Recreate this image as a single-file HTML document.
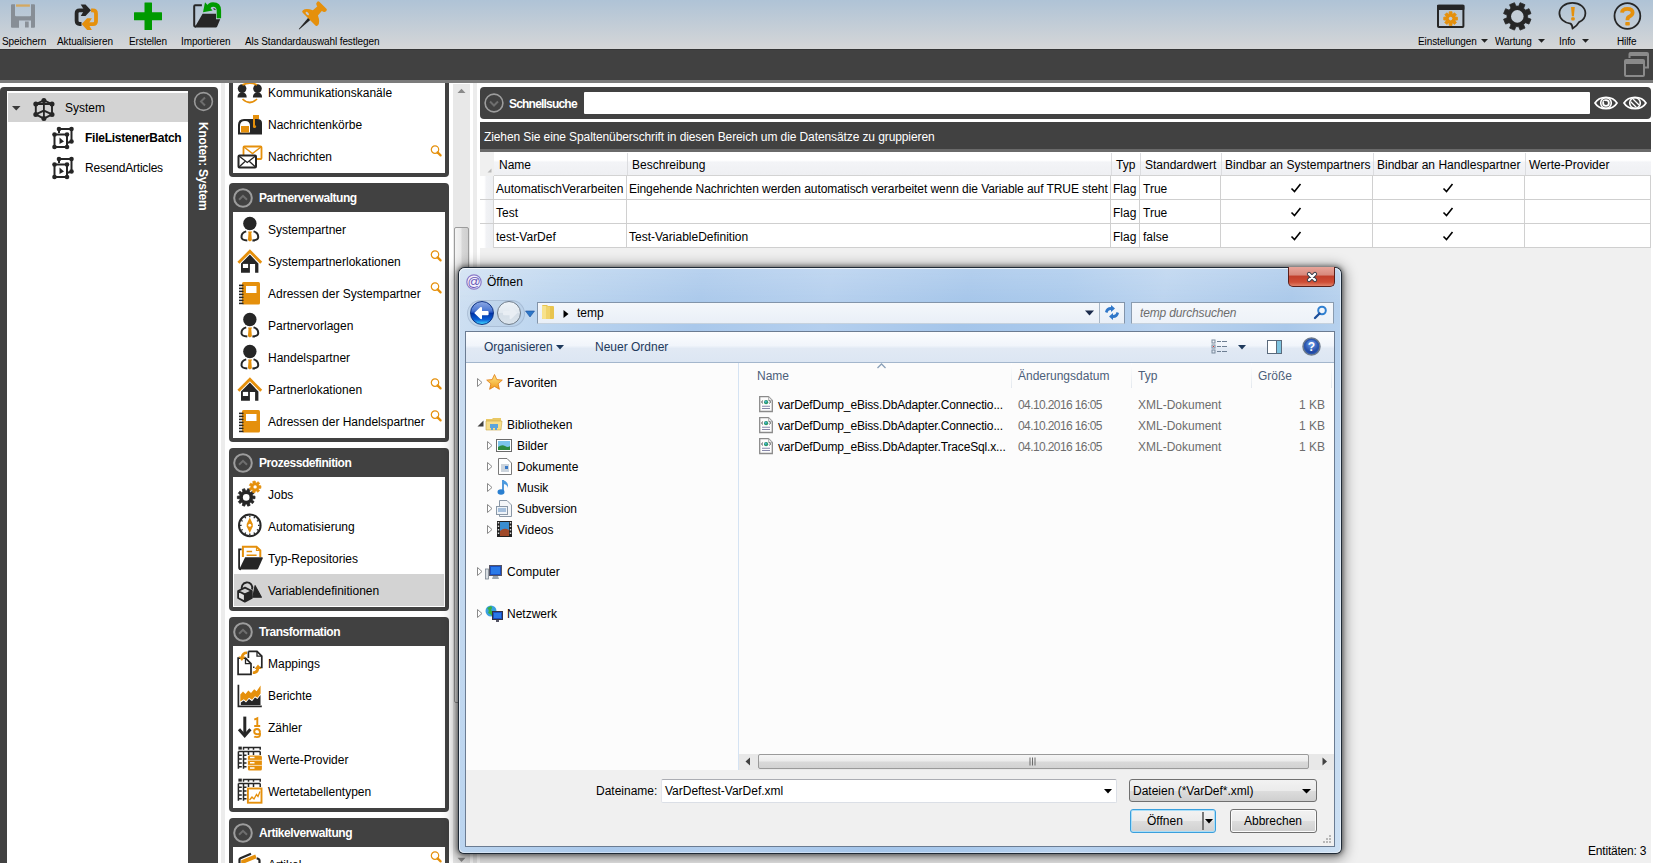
<!DOCTYPE html>
<html><head><meta charset="utf-8">
<style>
*{box-sizing:border-box;margin:0;padding:0}
html,body{width:1653px;height:863px;overflow:hidden;background:#fff;font-family:"Liberation Sans",sans-serif;font-size:12px;color:#000}
.a{position:absolute}
.t{position:absolute;white-space:nowrap;line-height:14px}
svg{position:absolute;overflow:visible}
/* toolbar */
#tb{left:0;top:0;width:1653px;height:49px;background:linear-gradient(#afc3d6,#d5d6d7)}
.tl{font-size:10px;line-height:12px;top:36px;letter-spacing:-0.1px}
#dbar{left:0;top:49px;width:1653px;height:31px;background:#414141;border-top:1px solid #353535}
#gline{left:0;top:80px;width:1653px;height:3px;background:#7b7b7b}
/* left panel */
#lp{left:0;top:87px;width:218px;height:800px;background:#414141;border-radius:4px 4px 0 0}
#lpin{left:7px;top:91px;width:181px;height:800px;background:#fff}
/* nav */
.np{position:absolute;left:229px;width:220px;background:#414141;border-radius:4px}
.npw{position:absolute;left:4px;right:4px;background:#fff}
.nh{position:absolute;left:30px;top:6px;color:#fff;font-weight:bold;letter-spacing:-0.45px;line-height:14px;white-space:nowrap}
.ni{position:absolute;left:0;width:212px;height:32px}
.ni .t{left:35px;top:10px}
.circ{position:absolute;width:20px;height:20px;border:2px solid #9a9a9a;border-radius:50%}
/* grid */
.hd{position:absolute;top:152px;height:23px;background:linear-gradient(#ffffff 0%,#ffffff 36%,#f3f4f7 44%,#eff0f3 100%)}
.vl{position:absolute;width:1px;background:#d0d0d0}
.hl{position:absolute;height:1px;background:#cfcfcf}
</style></head><body>

<!-- ===== TOOLBAR ===== -->
<div id="tb" class="a"></div>
<div id="dbar" class="a"></div>
<div id="gline" class="a"></div>

<div class="t tl" style="left:2px">Speichern</div>
<div class="t tl" style="left:57px">Aktualisieren</div>
<div class="t tl" style="left:129px">Erstellen</div>
<div class="t tl" style="left:181px">Importieren</div>
<div class="t tl" style="left:245px">Als Standardauswahl festlegen</div>
<div class="t tl" style="left:1418px">Einstellungen</div>
<div class="t tl" style="left:1495px">Wartung</div>
<div class="t tl" style="left:1559px">Info</div>
<div class="t tl" style="left:1617px">Hilfe</div>

<svg style="left:0px;top:0px" width="40" height="32" viewBox="0 0 40 32"><path d="M11 5.3 Q11 4.3 12 4.3 H15 V15.3 Q15 16.3 16 16.3 H30 Q31 16.3 31 15.3 V4.3 H34 Q35 4.3 35 5.3 V26.8 Q35 27.8 34 27.8 H31 V20.4 H19 V27.8 H12 Q11 27.8 11 26.8Z" fill="#878e96"/><rect x="25" y="21.5" width="3.7" height="6" fill="#8a9097"/><rect x="16" y="4.4" width="13.9" height="2.3" fill="#d4a860"/></svg>
<svg style="left:0px;top:0px" width="100" height="32" viewBox="0 0 100 32"><g transform="translate(70 0)"><path d="M14.8 10.3 H9.5 Q6.6 10.3 6.6 13.2 V20.8 Q6.6 24 9.8 24 H11.5" fill="none" stroke="#262626" stroke-width="3.8"/><path d="M10.7 4.4 H15.5 L20.9 10.3 L15.5 16.1 H10.7 L14.3 10.3Z" fill="#262626"/><path d="M17.8 24.1 H23.1 Q26 24.1 26 21.2 V13.6 Q26 10.4 22.8 10.4 H21.1" fill="none" stroke="#e5900c" stroke-width="3.8"/><path d="M21.9 30 H17.1 L11.7 24.1 L17.1 18.3 H21.9 L18.3 24.1Z" fill="#e5900c"/></g></svg>
<svg style="left:134px;top:2px" width="28" height="28" viewBox="0 0 28 28"><path d="M10.5 0.8 Q10.5 0.5 11 0.5 H17.5 Q18 0.5 18 1 V10.2 H27.5 Q28 10.2 28 10.7 V17.8 Q28 18.3 27.5 18.3 H18 V27.5 Q18 28 17.5 28 H11 Q10.5 28 10.5 27.5 V18.3 H0.5 Q0 18.3 0 17.8 V10.7 Q0 10.2 0.5 10.2 H10.5Z" fill="#009a00"/></svg>
<svg style="left:0px;top:0px" width="230" height="32" viewBox="0 0 230 32"><g transform="translate(190 0)"><path d="M11.9 5.2 H5.2 Q4.2 5.2 4.2 6.2 V25.6 Q4.2 26.6 5.2 26.6 H6" fill="none" stroke="#262626" stroke-width="2"/><path d="M4.6 27.6 L12.6 13.7 H26 V19.3 H30.2 L27.2 26.6 Q26.8 27.6 25.8 27.6Z" fill="#262626"/><path d="M28.9 18.3 V10.5 Q28.9 4.5 23 4.5 Q19.6 4.5 18 8" fill="none" stroke="#009a00" stroke-width="4.4"/><path d="M15 2.3 L22.6 10.6 L13 12.2Z" fill="#009a00"/><path d="M23.5 8.5 L25.5 9.8" stroke="#333" stroke-width="1.2"/></g></svg>
<svg style="left:0px;top:0px" width="330" height="32" viewBox="0 0 330 32"><g transform="translate(296 0)"><g transform="translate(24.6 7.6) rotate(45)"><path d="M-1.6 15 H1.6 L0.3 30.5 H-0.3Z" fill="#262626"/><path d="M-6.5 -1.8 Q-6.5 -3.2 -5 -3.2 H5 Q6.5 -3.2 6.5 -1.6 Q6.5 0.6 4.8 1 L3.2 1.5 L3.6 7.4 Q10.2 10.4 10.6 14.4 Q10.8 16.3 9 16.3 H-9 Q-10.8 16.3 -10.6 14.4 Q-10.2 10.4 -3.6 7.4 L-3.2 1.5 L-4.8 1 Q-6.5 0.6 -6.5 -1.8Z" fill="#e5900c"/><ellipse cx="-5.2" cy="13.6" rx="2.1" ry="1.1" fill="#bfcad6"/></g></g></svg>
<svg style="left:1430px;top:0px" width="40" height="32" viewBox="1430 0 40 32"><rect x="1438" y="5.7" width="25.4" height="21.3" rx="0.8" fill="none" stroke="#262626" stroke-width="2"/><rect x="1437" y="4.7" width="27.4" height="5.4" rx="0.8" fill="#262626"/><path d="M1448.69,13.98 L1449.12,13.82 L1449.14,11.75 L1452.06,11.75 L1452.08,13.82 L1452.51,13.98 L1452.93,14.18 L1454.41,12.73 L1456.47,14.79 L1455.02,16.27 L1455.22,16.69 L1455.38,17.12 L1457.45,17.14 L1457.45,20.06 L1455.38,20.08 L1455.22,20.51 L1455.02,20.93 L1456.47,22.41 L1454.41,24.47 L1452.93,23.02 L1452.51,23.22 L1452.08,23.38 L1452.06,25.45 L1449.14,25.45 L1449.12,23.38 L1448.69,23.22 L1448.27,23.02 L1446.79,24.47 L1444.73,22.41 L1446.18,20.93 L1445.98,20.51 L1445.82,20.08 L1443.75,20.06 L1443.75,17.14 L1445.82,17.12 L1445.98,16.69 L1446.18,16.27 L1444.73,14.79 L1446.79,12.73 L1448.27,14.18Z" fill="#e5900c" stroke="#e5900c" stroke-width="0.8" stroke-linejoin="round"/><circle cx="1450.6" cy="18.6" r="1.8" fill="#c3ccd5"/></svg>
<svg style="left:1500px;top:0px" width="36" height="34" viewBox="1500 0 36 34"><path d="M1527.60,16.40 L1527.51,17.76 L1531.01,19.22 L1528.99,24.10 L1525.48,22.66 L1524.58,23.68 L1523.56,24.58 L1525.00,28.09 L1520.12,30.11 L1518.66,26.61 L1517.30,26.70 L1515.94,26.61 L1514.48,30.11 L1509.60,28.09 L1511.04,24.58 L1510.02,23.68 L1509.12,22.66 L1505.61,24.10 L1503.59,19.22 L1507.09,17.76 L1507.00,16.40 L1507.09,15.04 L1503.59,13.58 L1505.61,8.70 L1509.12,10.14 L1510.02,9.12 L1511.04,8.22 L1509.60,4.71 L1514.48,2.69 L1515.94,6.19 L1517.30,6.10 L1518.66,6.19 L1520.12,2.69 L1525.00,4.71 L1523.56,8.22 L1524.58,9.12 L1525.48,10.14 L1528.99,8.70 L1531.01,13.58 L1527.51,15.04Z" fill="#262626" stroke="#262626" stroke-width="0.8" stroke-linejoin="round"/><circle cx="1517.3" cy="16.4" r="6.3" fill="#c3ccd5"/></svg>
<svg style="left:1550px;top:0px" width="40" height="34" viewBox="1550 0 40 34"><path d="M1572.4 2.9 C1565 2.9 1559.4 7.4 1559.4 13.3 C1559.4 18.6 1564 22.6 1570.5 23.6 Q1572.3 24.5 1572.6 28.6 Q1577 26 1579 22.2 C1583 20.5 1585.4 17.2 1585.4 13.3 C1585.4 7.4 1579.8 2.9 1572.4 2.9Z" fill="none" stroke="#262626" stroke-width="1.8" stroke-linejoin="round"/><path d="M1571 7.1 H1574.8 L1573.9 16.2 H1571.9Z" fill="#e5900c"/><rect x="1571.2" y="17.3" width="3.5" height="3.2" rx="1" fill="#e5900c"/></svg>
<svg style="left:1610px;top:0px" width="40" height="34" viewBox="1610 0 40 34"><circle cx="1627.4" cy="16" r="12.9" fill="none" stroke="#262626" stroke-width="1.8"/><path d="M1622 12.6 Q1622.3 8.8 1627.4 8.8 Q1632.6 8.8 1632.6 12.6 Q1632.6 15.2 1629.6 16.4 Q1627.5 17.2 1627.5 19.6 V20.2" fill="none" stroke="#e5900c" stroke-width="3.8" stroke-linecap="butt"/><rect x="1625.3" y="21.9" width="4.5" height="3.6" rx="0.8" fill="#e5900c"/></svg>
<svg style="left:1481px;top:39px" width="7" height="4" viewBox="0 0 7 4"><path d="M0 0 H7 L3.5 3.8Z" fill="#222"/></svg>
<svg style="left:1538px;top:39px" width="7" height="4" viewBox="0 0 7 4"><path d="M0 0 H7 L3.5 3.8Z" fill="#222"/></svg>
<svg style="left:1582px;top:39px" width="7" height="4" viewBox="0 0 7 4"><path d="M0 0 H7 L3.5 3.8Z" fill="#222"/></svg>
<svg style="left:1624px;top:52px" width="26" height="26" viewBox="0 0 26 26"><path d="M5.5 6 V2 Q5.5 1 6.5 1 H23 Q24 1 24 2 V15.5 H21" fill="none" stroke="#8a8a8a" stroke-width="2"/><rect x="5" y="1" width="19" height="3" fill="#8a8a8a"/><rect x="1" y="8" width="19" height="16" rx="1" fill="#414141" stroke="#8a8a8a" stroke-width="2"/><rect x="1" y="8" width="19" height="4" fill="#8a8a8a"/></svg>
<!-- ===== LEFT PANEL ===== -->
<div id="lp" class="a"></div>
<div id="lpin" class="a"></div>
<div class="a" style="left:8px;top:93px;width:180px;height:29px;background:#d3d3d3"></div>
<div class="t" style="left:65px;top:101px">System</div>
<div class="t" style="left:85px;top:131px;font-weight:bold;letter-spacing:-0.25px">FileListenerBatch</div>
<div class="t" style="left:85px;top:161px;letter-spacing:-0.2px">ResendArticles</div>
<div class="t" style="left:196px;top:122px;color:#fff;font-weight:bold;font-size:12px;transform-origin:0 0;transform:translate(14px,0) rotate(90deg);letter-spacing:-0.2px">Knoten: System</div>

<svg style="left:12px;top:106px" width="9" height="5" viewBox="0 0 9 5"><path d="M0 0 H8.5 L4.25 4.5Z" fill="#3a3a3a"/></svg>
<svg style="left:30px;top:95px" width="26" height="27" viewBox="30 95 26 27"><path d="M43.9 100.4 L52 104 V114.4 L43.9 118.6 L35.8 114.4 V104Z" fill="none" stroke="#262626" stroke-width="1.9" stroke-linejoin="round"/><path d="M43.9 100.4 V118.6 M35.8 104 H52 M35.8 114.4 L43.9 110.6 L52 114.4" fill="none" stroke="#262626" stroke-width="1.8"/><circle cx="43.9" cy="100.4" r="2.5" fill="#262626"/><circle cx="52" cy="104" r="2.5" fill="#262626"/><circle cx="52" cy="114.4" r="2.5" fill="#262626"/><circle cx="43.9" cy="118.6" r="2.5" fill="#262626"/><circle cx="35.8" cy="114.4" r="2.5" fill="#262626"/><circle cx="35.8" cy="104" r="2.5" fill="#262626"/></svg>
<svg style="left:52px;top:126px" width="23" height="24" viewBox="0 0 23 24"><path d="M7 3 H19.5 V15.5 M7 3 V7" fill="none" stroke="#262626" stroke-width="2"/><rect x="2.5" y="8.5" width="12.5" height="12.5" fill="none" stroke="#262626" stroke-width="2"/><path d="M7.5 11.5 V18 L12 15.5Z" fill="#262626"/><path d="M15 17 L19.5 15.5" stroke="#262626" stroke-width="2"/><circle cx="7" cy="3" r="2.3" fill="#262626"/><circle cx="19.5" cy="3" r="2.3" fill="#262626"/><circle cx="19.5" cy="15.5" r="2.3" fill="#262626"/><circle cx="2.5" cy="8.5" r="2.3" fill="#262626"/><circle cx="15" cy="8.5" r="2.3" fill="#262626"/><circle cx="2.5" cy="21" r="2.3" fill="#262626"/><circle cx="15" cy="21" r="2.3" fill="#262626"/></svg>
<svg style="left:52px;top:156px" width="23" height="24" viewBox="0 0 23 24"><path d="M7 3 H19.5 V15.5 M7 3 V7" fill="none" stroke="#262626" stroke-width="2"/><rect x="2.5" y="8.5" width="12.5" height="12.5" fill="none" stroke="#262626" stroke-width="2"/><path d="M7.5 11.5 V18 L12 15.5Z" fill="#262626"/><path d="M15 17 L19.5 15.5" stroke="#262626" stroke-width="2"/><circle cx="7" cy="3" r="2.3" fill="#262626"/><circle cx="19.5" cy="3" r="2.3" fill="#262626"/><circle cx="19.5" cy="15.5" r="2.3" fill="#262626"/><circle cx="2.5" cy="8.5" r="2.3" fill="#262626"/><circle cx="15" cy="8.5" r="2.3" fill="#262626"/><circle cx="2.5" cy="21" r="2.3" fill="#262626"/><circle cx="15" cy="21" r="2.3" fill="#262626"/></svg>
<svg style="left:193px;top:91px" width="21" height="21" viewBox="0 0 21 21"><circle cx="10.5" cy="10.5" r="8.9" fill="none" stroke="#9a9a9a" stroke-width="1.6"/><path d="M12 6.5 L8 10.5 L12 14.5" fill="none" stroke="#6e6e6e" stroke-width="2"/></svg>
<!-- ===== NAV ===== -->
<div class="a" style="left:221px;top:83px;width:4px;height:780px;background:#ececec"></div>
<div class="a" style="left:453px;top:84px;width:17px;height:779px;background:#e8e8e8"></div>
<div class="a" style="left:473px;top:83px;width:4px;height:780px;background:#ececec"></div>

<div id="navclip" class="a" style="left:0;top:83px;width:453px;height:780px;overflow:hidden">
 <div class="a" style="left:0;top:-83px;width:453px;height:1000px">
  <!-- panel 1 (Kommunikation) -->
  <div class="np" style="top:40px;height:137px">
   <div class="npw" style="top:4px;height:129px"></div>
  </div>
  <!-- Partnerverwaltung -->
  <div class="np" style="top:183px;height:259px">
   <div class="npw" style="top:29px;height:226px"></div>
   <div class="nh" style="top:8px">Partnerverwaltung</div>
  </div>
  <!-- Prozessdefinition -->
  <div class="np" style="top:448px;height:163px">
   <div class="npw" style="top:29px;height:130px"></div>
   <div class="nh" style="top:8px">Prozessdefinition</div>
  </div>
  <!-- Transformation -->
  <div class="np" style="top:617px;height:195px">
   <div class="npw" style="top:29px;height:162px"></div>
   <div class="nh" style="top:8px">Transformation</div>
  </div>
  <!-- Artikelverwaltung -->
  <div class="np" style="top:818px;height:195px">
   <div class="npw" style="top:29px;height:162px"></div>
   <div class="nh" style="top:8px">Artikelverwaltung</div>
  </div>
  <div class="a" style="left:234px;top:574px;width:210px;height:32px;background:#d3d3d3"></div>
<svg style="left:237px;top:79px" width="26" height="26" viewBox="0 0 26 26"><circle cx="5.1" cy="9.6" r="4.3" fill="#262626"/><path d="M0.5 18.6 Q0.5 13.6 5.1 13.6 Q9.7 13.6 9.7 18.6Z" fill="#262626"/><circle cx="20.5" cy="9.6" r="4.3" fill="#262626"/><path d="M15.9 18.6 Q15.9 13.6 20.5 13.6 Q25.1 13.6 25.1 18.6Z" fill="#262626"/><path d="M5.5 20 Q12.8 27 20 20" fill="none" stroke="#e5900c" stroke-width="1.7"/><path d="M5.5 6 Q12.8 2.2 20 6" fill="none" stroke="#e5900c" stroke-width="1.7"/></svg>
<svg style="left:237px;top:111px" width="26" height="26" viewBox="0 0 26 26"><path d="M1 23.5 V14 Q1 8 7 8 H20 Q25 8 25 12 V23.5Z" fill="#262626"/><path d="M3 21.5 V15 Q3 10 8 10 Q13 10 13 15 V21.5Z" fill="#fff"/><rect x="4" y="15" width="8" height="6.5" fill="#e5900c"/><rect x="16" y="4" width="6" height="4" fill="#e5900c"/><rect x="16" y="4" width="2" height="12" fill="#e5900c"/><circle cx="17.5" cy="15.5" r="1.6" fill="#e5900c"/></svg>
<svg style="left:237px;top:143px" width="26" height="26" viewBox="0 0 26 26"><rect x="6.5" y="3.5" width="18" height="12.5" rx="1" fill="#fff" stroke="#e5900c" stroke-width="1.8"/><path d="M7 4 L15.5 10.5 L24 4" fill="none" stroke="#e5900c" stroke-width="1.5"/><rect x="1.5" y="12.5" width="17.5" height="12" rx="1" fill="#fff" stroke="#262626" stroke-width="2"/><path d="M2 13 L10.25 19.5 L18.5 13 M2 24 L8 18.5 M18.5 24 L12.5 18.5" fill="none" stroke="#262626" stroke-width="1.3"/></svg>
<svg style="left:237px;top:216px" width="26" height="27" viewBox="0 0 26 27"><circle cx="12.85" cy="7.55" r="6.7" fill="#262626"/><path d="M9.2 15.4 C6 16.2 4.3 18.5 4.5 21.5 C4.7 23.5 7 24.3 10.3 24.5" fill="none" stroke="#262626" stroke-width="2"/><path d="M16.5 15.4 C19.7 16.2 21.4 18.5 21.2 21.5 C21 23.5 18.7 24.3 15.4 24.5" fill="none" stroke="#262626" stroke-width="2"/><path d="M11.1 15.4 H15.1 L14.3 17.2 L14.9 24.3 L12.9 25.4 L10.9 24.3 L11.5 17.2Z" fill="#e5900c"/></svg>
<svg style="left:237px;top:248px" width="26" height="27" viewBox="0 0 26 27"><path d="M4 15.5 L12.9 6.6 L21.4 15.5 V24.8 H18.1 V15.9 H12.9 V24.8 H4Z" fill="#262626"/><path d="M1.4 14.8 L12.9 3.3 L24.2 14.8" fill="none" stroke="#e5900c" stroke-width="2.8" stroke-linejoin="miter"/><rect x="5.9" y="15.9" width="5.2" height="4.1" fill="#fff"/></svg>
<svg style="left:237px;top:280px" width="26" height="27" viewBox="0 0 26 27"><rect x="5" y="2" width="18" height="22.5" rx="1.5" fill="#e5900c"/><rect x="9" y="6" width="10.5" height="7" fill="#fff"/><rect x="2" y="4.6" width="4.5" height="1.6" fill="#262626"/><rect x="2" y="7.6" width="4.5" height="1.6" fill="#262626"/><rect x="2" y="10.6" width="4.5" height="1.6" fill="#262626"/><rect x="2" y="13.6" width="4.5" height="1.6" fill="#262626"/><rect x="2" y="16.6" width="4.5" height="1.6" fill="#262626"/><rect x="2" y="19.6" width="4.5" height="1.6" fill="#262626"/><rect x="2" y="22.6" width="4.5" height="1.6" fill="#262626"/></svg>
<svg style="left:237px;top:312px" width="26" height="27" viewBox="0 0 26 27"><circle cx="12.85" cy="7.55" r="6.7" fill="#262626"/><path d="M9.2 15.4 C6 16.2 4.3 18.5 4.5 21.5 C4.7 23.5 7 24.3 10.3 24.5" fill="none" stroke="#262626" stroke-width="2"/><path d="M16.5 15.4 C19.7 16.2 21.4 18.5 21.2 21.5 C21 23.5 18.7 24.3 15.4 24.5" fill="none" stroke="#262626" stroke-width="2"/><path d="M11.1 15.4 H15.1 L14.3 17.2 L14.9 24.3 L12.9 25.4 L10.9 24.3 L11.5 17.2Z" fill="#e5900c"/></svg>
<svg style="left:237px;top:344px" width="26" height="27" viewBox="0 0 26 27"><circle cx="12.85" cy="7.55" r="6.7" fill="#262626"/><path d="M9.2 15.4 C6 16.2 4.3 18.5 4.5 21.5 C4.7 23.5 7 24.3 10.3 24.5" fill="none" stroke="#262626" stroke-width="2"/><path d="M16.5 15.4 C19.7 16.2 21.4 18.5 21.2 21.5 C21 23.5 18.7 24.3 15.4 24.5" fill="none" stroke="#262626" stroke-width="2"/><path d="M11.1 15.4 H15.1 L14.3 17.2 L14.9 24.3 L12.9 25.4 L10.9 24.3 L11.5 17.2Z" fill="#e5900c"/></svg>
<svg style="left:237px;top:376px" width="26" height="27" viewBox="0 0 26 27"><path d="M4 15.5 L12.9 6.6 L21.4 15.5 V24.8 H18.1 V15.9 H12.9 V24.8 H4Z" fill="#262626"/><path d="M1.4 14.8 L12.9 3.3 L24.2 14.8" fill="none" stroke="#e5900c" stroke-width="2.8" stroke-linejoin="miter"/><rect x="5.9" y="15.9" width="5.2" height="4.1" fill="#fff"/></svg>
<svg style="left:237px;top:408px" width="26" height="27" viewBox="0 0 26 27"><rect x="5" y="2" width="18" height="22.5" rx="1.5" fill="#e5900c"/><rect x="9" y="6" width="10.5" height="7" fill="#fff"/><rect x="2" y="4.6" width="4.5" height="1.6" fill="#262626"/><rect x="2" y="7.6" width="4.5" height="1.6" fill="#262626"/><rect x="2" y="10.6" width="4.5" height="1.6" fill="#262626"/><rect x="2" y="13.6" width="4.5" height="1.6" fill="#262626"/><rect x="2" y="16.6" width="4.5" height="1.6" fill="#262626"/><rect x="2" y="19.6" width="4.5" height="1.6" fill="#262626"/><rect x="2" y="22.6" width="4.5" height="1.6" fill="#262626"/></svg>
<svg style="left:237px;top:481px" width="26" height="27" viewBox="0 0 26 27"><path d="M9.20,9.80 L9.89,9.84 L10.74,7.63 L13.10,8.40 L12.50,10.69 L13.08,11.06 L13.61,11.49 L15.60,10.22 L17.06,12.22 L15.23,13.72 L15.48,14.36 L15.66,15.02 L18.01,15.16 L18.01,17.64 L15.66,17.78 L15.48,18.44 L15.23,19.08 L17.06,20.58 L15.60,22.58 L13.61,21.31 L13.08,21.74 L12.50,22.11 L13.10,24.40 L10.74,25.17 L9.89,22.96 L9.20,23.00 L8.51,22.96 L7.66,25.17 L5.30,24.40 L5.90,22.11 L5.32,21.74 L4.79,21.31 L2.80,22.58 L1.34,20.58 L3.17,19.08 L2.92,18.44 L2.74,17.78 L0.39,17.64 L0.39,15.16 L2.74,15.02 L2.92,14.36 L3.17,13.72 L1.34,12.22 L2.80,10.22 L4.79,11.49 L5.32,11.06 L5.90,10.69 L5.30,8.40 L7.66,7.63 L8.51,9.84Z" fill="#262626" stroke="#262626" stroke-width="0.8" stroke-linejoin="round"/><circle cx="9.2" cy="16.4" r="3.3" fill="#fff"/><path d="M15.62,2.63 L16.13,2.30 L15.75,0.49 L18.16,0.00 L18.51,1.82 L19.11,1.93 L19.69,2.12 L20.86,0.69 L22.75,2.27 L21.54,3.68 L21.84,4.21 L22.05,4.78 L23.90,4.81 L23.84,7.27 L21.99,7.21 L21.75,7.77 L21.43,8.29 L22.57,9.75 L20.61,11.24 L19.50,9.75 L18.91,9.92 L18.31,9.99 L17.87,11.80 L15.49,11.19 L15.96,9.40 L15.47,9.04 L15.03,8.62 L13.35,9.40 L12.34,7.16 L14.03,6.41 L14.00,5.80 L14.06,5.19 L12.40,4.36 L13.52,2.18 L15.17,3.04Z" fill="#e5900c" stroke="#e5900c" stroke-width="0.8" stroke-linejoin="round"/><circle cx="18.1" cy="5.9" r="1.7" fill="#fff"/></svg>
<svg style="left:237px;top:513px" width="26" height="26" viewBox="0 0 26 26"><circle cx="12.8" cy="12.4" r="10.8" fill="#fff" stroke="#262626" stroke-width="2"/><path d="M21.00 12.40 L22.60 12.40" stroke="#262626" stroke-width="1.3"/><path d="M19.90 16.50 L21.29 17.30" stroke="#262626" stroke-width="1.3"/><path d="M16.90 19.50 L17.70 20.89" stroke="#262626" stroke-width="1.3"/><path d="M12.80 20.60 L12.80 22.20" stroke="#262626" stroke-width="1.3"/><path d="M8.70 19.50 L7.90 20.89" stroke="#262626" stroke-width="1.3"/><path d="M5.70 16.50 L4.31 17.30" stroke="#262626" stroke-width="1.3"/><path d="M4.60 12.40 L3.00 12.40" stroke="#262626" stroke-width="1.3"/><path d="M5.70 8.30 L4.31 7.50" stroke="#262626" stroke-width="1.3"/><path d="M8.70 5.30 L7.90 3.91" stroke="#262626" stroke-width="1.3"/><path d="M12.80 4.20 L12.80 2.60" stroke="#262626" stroke-width="1.3"/><path d="M16.90 5.30 L17.70 3.91" stroke="#262626" stroke-width="1.3"/><path d="M19.90 8.30 L21.29 7.50" stroke="#262626" stroke-width="1.3"/><path d="M12.75 4.5 L15.8 11 V13.5 L12.75 20 L9.7 13.5 V11Z" fill="#e5900c"/><circle cx="12.75" cy="12.3" r="1.5" fill="#fff"/></svg>
<svg style="left:237px;top:545px" width="27" height="27" viewBox="0 0 27 27"><path d="M5.9 12 V1.7 H19.5 L23.3 5.5 V12" fill="#fff" stroke="#e5900c" stroke-width="2"/><path d="M19.5 1.7 V5.5 H23.3" fill="none" stroke="#e5900c" stroke-width="1.2"/><path d="M9.6 6.6 H15.1 M9.6 10.3 H19.6" stroke="#e5900c" stroke-width="1.5"/><path d="M4.6 4.4 H2.1 V22.6 Q2.1 24.4 4 24.4" fill="none" stroke="#262626" stroke-width="1.8"/><path d="M2.2 24.4 L8.1 12.2 H24.9 Q26.2 12.2 25.7 13.4 L21.2 23.4 Q20.7 24.4 19.7 24.4Z" fill="#262626"/></svg>
<svg style="left:237px;top:577px" width="26" height="28" viewBox="0 0 26 28"><path d="M5.5 13.5 A5.3 5.3 0 1 1 15 12.5" fill="none" stroke="#262626" stroke-width="1.9"/><path d="M18.1 8.7 L24.4 20.2 H15.9Z" fill="#262626" stroke="#262626" stroke-width="1.2" stroke-linejoin="round"/><path d="M8 10.6 L14.8 14 L7.8 17.4 L1.1 14Z" fill="#cfcfcf"/><path d="M1.1 14 L7.8 17.4 V24.6 L1.1 21Z" fill="#e2e2e2"/><path d="M14.8 14 L7.8 17.4 V24.6 L14.8 21Z" fill="#262626"/><path d="M8 10.6 L14.8 14 V21 L7.8 24.6 L1.1 21 V14Z M1.1 14 L7.8 17.4 L14.8 14 M7.8 17.4 V24.6" fill="none" stroke="#262626" stroke-width="1.8" stroke-linejoin="round"/></svg>
<svg style="left:237px;top:650px" width="27" height="27" viewBox="0 0 27 27"><path d="M11.4 1.4 H20 L24.8 6.2 V17.5 H20.5" fill="#fff" stroke="#262626" stroke-width="1.7"/><path d="M20 1.4 V6.2 H24.8" fill="none" stroke="#262626" stroke-width="1.3"/><path d="M11.4 1.4 V8" fill="none" stroke="#262626" stroke-width="1.7"/><path d="M1.1 8.1 H8.5 L14 13.6 V24.4 H1.1Z" fill="#fff" stroke="#262626" stroke-width="1.7"/><path d="M8.5 8.1 V13.6 H14" fill="none" stroke="#262626" stroke-width="1.3"/><rect x="16" y="16.5" width="1.5" height="1.5" fill="#262626"/><path d="M10 2.8 Q5.5 2.8 5 7.5" fill="none" stroke="#e5900c" stroke-width="2.6"/><path d="M1.5 6.5 L8.5 6.5 L4.8 11Z" fill="#e5900c"/><path d="M15.8 22.8 Q20.5 22.8 21 18" fill="none" stroke="#e5900c" stroke-width="2.6"/><path d="M17.5 19 L24.5 19 L21 14.5Z" fill="#e5900c"/></svg>
<svg style="left:237px;top:682px" width="26" height="26" viewBox="0 0 26 26"><path d="M3.8 23 V20.5 L6.8 18.5 L9 20.5 L12 17 L15 19.2 L18 15.5 L20.5 17 L23.5 13 V23Z" fill="#262626"/><path d="M3.3 12.5 L6 9.5 L8.5 12 L11.3 8.5 L14 11 L17.2 7.3 L19.6 9.2 L23.6 3.5 V11.5 L20.5 15.8 L18 14.2 L15 17.8 L12 15.8 L9 19.2 L6.8 17.2 L3.3 19.5Z" fill="#e5900c"/><path d="M1.4 2.8 V24.3 H24.8" fill="none" stroke="#262626" stroke-width="1.7"/></svg>
<svg style="left:237px;top:714px" width="26" height="26" viewBox="0 0 26 26"><path d="M7.8 2.6 V20" stroke="#262626" stroke-width="3"/><path d="M2 15.2 L7.7 21.8 L13.4 15.2" fill="none" stroke="#262626" stroke-width="3" stroke-linejoin="miter"/><path d="M17.3 5.6 L20.3 4.2 V12 M17.2 12 H23.2" fill="none" stroke="#e5900c" stroke-width="1.9"/><path d="M23 18.5 Q23 15 20 15 Q17.2 15 17.2 17.6 Q17.2 20.2 20 20.2 Q22.3 20.2 23 18.8 V20.5 Q23 23.1 20 23.1 Q18 23.1 17.3 22.3" fill="none" stroke="#e5900c" stroke-width="1.9"/></svg>
<svg style="left:237px;top:746px" width="26" height="27" viewBox="0 0 26 27"><rect x="1.4" y="0.6" width="3.4" height="3" fill="#262626"/><path d="M6.5 3.8 V1.4 H23.2 V3.8 M11.5 1.4 V3.8 M16.5 1.4 V3.8" fill="none" stroke="#262626" stroke-width="1.5"/><path d="M1.4 5.5 H23.2 M1.4 5.5 V22.8 M6.5 5.5 V22.8 M4.8 9.3 H1.4 M4.8 13.1 H1.4 M4.8 16.9 H1.4 M4.8 20.7 H1.4 M9.5 9.3 H6.5 M9.5 13.1 H6.5 M9.5 16.9 H6.5 M9.5 20.7 H6.5 M11.5 5.5 V9 M16.5 5.5 V9 M23.2 5.5 V9" fill="none" stroke="#262626" stroke-width="1.5"/><rect x="10.9" y="9.4" width="14" height="15" rx="1.5" fill="#e5900c"/><path d="M10.9 14.3 H24.9 M10.9 19.4 H24.9" stroke="#fff" stroke-width="0.7"/><path d="M13 11.6 H17.5 M13 16.8 H17.5 M13 21.9 H17.5" stroke="#fff" stroke-width="1.5"/></svg>
<svg style="left:237px;top:778px" width="26" height="27" viewBox="0 0 26 27"><rect x="1.4" y="0.6" width="3.4" height="3" fill="#262626"/><path d="M6.5 3.8 V1.4 H23.2 V3.8 M11.5 1.4 V3.8 M16.5 1.4 V3.8" fill="none" stroke="#262626" stroke-width="1.5"/><path d="M1.4 5.5 H23.2 M1.4 5.5 V22.8 M6.5 5.5 V22.8 M4.8 9.3 H1.4 M4.8 13.1 H1.4 M4.8 16.9 H1.4 M4.8 20.7 H1.4 M9.5 9.3 H6.5 M9.5 13.1 H6.5 M9.5 16.9 H6.5 M9.5 20.7 H6.5 M11.5 5.5 V9 M16.5 5.5 V9 M23.2 5.5 V9" fill="none" stroke="#262626" stroke-width="1.5"/><rect x="10.9" y="10.5" width="13.6" height="14.2" fill="#fff" stroke="#e5900c" stroke-width="1.9"/><path d="M12.5 22 L15 19 L17 21 L19.5 16.5 L21 18.5 L23 13.5" fill="none" stroke="#e5900c" stroke-width="1.3"/></svg>
<svg style="left:237px;top:849px" width="26" height="16" viewBox="0 0 26 16"><path d="M2.5 14.5 V10.5 Q2.5 9.6 3.4 9.2 L14 4.7" fill="none" stroke="#262626" stroke-width="2.2"/><path d="M6.2 14 V12.6 L19 7.4" fill="none" stroke="#e5900c" stroke-width="4"/><path d="M19.8 9.3 L21.5 10 Q22.5 10.5 22.5 11.6 V15" fill="none" stroke="#262626" stroke-width="2.2"/></svg>
<svg style="left:430px;top:145px" width="12" height="12" viewBox="0 0 12 12"><circle cx="5" cy="4.6" r="3.7" fill="none" stroke="#e5900c" stroke-width="1.2"/><path d="M7.6 7.4 L10.6 10.4" stroke="#e5900c" stroke-width="2.2" stroke-linecap="round"/></svg>
<svg style="left:430px;top:250px" width="12" height="12" viewBox="0 0 12 12"><circle cx="5" cy="4.6" r="3.7" fill="none" stroke="#e5900c" stroke-width="1.2"/><path d="M7.6 7.4 L10.6 10.4" stroke="#e5900c" stroke-width="2.2" stroke-linecap="round"/></svg>
<svg style="left:430px;top:282px" width="12" height="12" viewBox="0 0 12 12"><circle cx="5" cy="4.6" r="3.7" fill="none" stroke="#e5900c" stroke-width="1.2"/><path d="M7.6 7.4 L10.6 10.4" stroke="#e5900c" stroke-width="2.2" stroke-linecap="round"/></svg>
<svg style="left:430px;top:378px" width="12" height="12" viewBox="0 0 12 12"><circle cx="5" cy="4.6" r="3.7" fill="none" stroke="#e5900c" stroke-width="1.2"/><path d="M7.6 7.4 L10.6 10.4" stroke="#e5900c" stroke-width="2.2" stroke-linecap="round"/></svg>
<svg style="left:430px;top:410px" width="12" height="12" viewBox="0 0 12 12"><circle cx="5" cy="4.6" r="3.7" fill="none" stroke="#e5900c" stroke-width="1.2"/><path d="M7.6 7.4 L10.6 10.4" stroke="#e5900c" stroke-width="2.2" stroke-linecap="round"/></svg>
<svg style="left:430px;top:851px" width="12" height="12" viewBox="0 0 12 12"><circle cx="5" cy="4.6" r="3.7" fill="none" stroke="#e5900c" stroke-width="1.2"/><path d="M7.6 7.4 L10.6 10.4" stroke="#e5900c" stroke-width="2.2" stroke-linecap="round"/></svg>
<svg style="left:233px;top:188px" width="20" height="20" viewBox="0 0 20 20"><circle cx="10" cy="10" r="8.8" fill="none" stroke="#9d9d9d" stroke-width="2"/><path d="M6 11.8 L10 7.8 L14 11.8" fill="none" stroke="#6e6e6e" stroke-width="2"/></svg>
<svg style="left:233px;top:453px" width="20" height="20" viewBox="0 0 20 20"><circle cx="10" cy="10" r="8.8" fill="none" stroke="#9d9d9d" stroke-width="2"/><path d="M6 11.8 L10 7.8 L14 11.8" fill="none" stroke="#6e6e6e" stroke-width="2"/></svg>
<svg style="left:233px;top:622px" width="20" height="20" viewBox="0 0 20 20"><circle cx="10" cy="10" r="8.8" fill="none" stroke="#9d9d9d" stroke-width="2"/><path d="M6 11.8 L10 7.8 L14 11.8" fill="none" stroke="#6e6e6e" stroke-width="2"/></svg>
<svg style="left:233px;top:823px" width="20" height="20" viewBox="0 0 20 20"><circle cx="10" cy="10" r="8.8" fill="none" stroke="#9d9d9d" stroke-width="2"/><path d="M6 11.8 L10 7.8 L14 11.8" fill="none" stroke="#6e6e6e" stroke-width="2"/></svg>
<!-- nav item labels -->
  <div class="t" style="left:268px;top:86px">Kommunikationskanäle</div>
  <div class="t" style="left:268px;top:118px">Nachrichtenkörbe</div>
  <div class="t" style="left:268px;top:150px">Nachrichten</div>
  <div class="t" style="left:268px;top:223px">Systempartner</div>
  <div class="t" style="left:268px;top:255px">Systempartnerlokationen</div>
  <div class="t" style="left:268px;top:287px">Adressen der Systempartner</div>
  <div class="t" style="left:268px;top:319px">Partnervorlagen</div>
  <div class="t" style="left:268px;top:351px">Handelspartner</div>
  <div class="t" style="left:268px;top:383px">Partnerlokationen</div>
  <div class="t" style="left:268px;top:415px">Adressen der Handelspartner</div>
  <div class="t" style="left:268px;top:488px">Jobs</div>
  <div class="t" style="left:268px;top:520px">Automatisierung</div>
  <div class="t" style="left:268px;top:552px">Typ-Repositories</div>
  <div class="t" style="left:268px;top:584px">Variablendefinitionen</div>
  <div class="t" style="left:268px;top:657px">Mappings</div>
  <div class="t" style="left:268px;top:689px">Berichte</div>
  <div class="t" style="left:268px;top:721px">Zähler</div>
  <div class="t" style="left:268px;top:753px">Werte-Provider</div>
  <div class="t" style="left:268px;top:785px">Wertetabellentypen</div>
  <div class="t" style="left:268px;top:858px">Artikel</div>
 </div>
</div>

<svg style="left:457px;top:857px" width="9" height="6"><path d="M0.5 0.8 L4.5 5 L8.5 0.8Z" fill="#8a8a8a"/></svg>
<!-- ===== MAIN ===== -->
<div class="a" style="left:480px;top:248px;width:1173px;height:615px;background:#f0f0f0"></div>
<div class="a" style="left:480px;top:87px;width:1171px;height:32px;background:#414141;border-radius:4px"></div>
<div class="t" style="left:509px;top:97px;color:#fff;font-weight:bold;letter-spacing:-0.8px">Schnellsuche</div>
<div class="a" style="left:584px;top:92px;width:1006px;height:22px;background:#fff;border-radius:1px"></div>
<div class="a" style="left:480px;top:122px;width:1171px;height:30px;background:#414141;border-bottom:3px solid #6a6a6a"></div>
<div class="t" style="left:484px;top:130px;color:#fff;letter-spacing:-0.1px">Ziehen Sie eine Spaltenüberschrift in diesen Bereich um die Datensätze zu gruppieren</div>

<div class="a" style="left:1651px;top:83px;width:2px;height:780px;background:#fff"></div>
<!-- grid -->
<div class="a" style="left:480px;top:152px;width:1171px;height:96px;background:#fff"></div>
<div class="a" style="left:480px;top:152px;width:14px;height:24px;background:#f0f0f0"></div><div class="a" style="left:480px;top:176px;width:14px;height:72px;background:linear-gradient(90deg,#ffffff 0%,#ffffff 30%,#f1f2f5 45%,#eceef1 100%)"></div><svg style="left:487px;top:168px" width="5" height="5"><path d="M4.5 0.5 V4.5 H0.5Z" fill="#b8b8b8"/></svg>
<div class="hd" style="left:494px;width:1157px"></div>


<svg style="left:484px;top:93px" width="20" height="20" viewBox="0 0 20 20"><circle cx="10" cy="10" r="8.9" fill="none" stroke="#9d9d9d" stroke-width="1.6"/><path d="M6 8.5 L10 12.5 L14 8.5" fill="none" stroke="#6e6e6e" stroke-width="2"/></svg>
<svg style="left:1594px;top:94px" width="24" height="18"><path d="M1 9 C5.5 1.5 18.5 1.5 23 9 C18.5 16.5 5.5 16.5 1 9Z" fill="none" stroke="#fff" stroke-width="1.7"/><circle cx="12" cy="9" r="5.3" fill="none" stroke="#fff" stroke-width="1.6"/><circle cx="12" cy="9" r="2.9" fill="none" stroke="#fff" stroke-width="1.8"/><circle cx="10.6" cy="7.6" r="0.9" fill="#414141"/></svg>
<svg style="left:1623px;top:94px" width="24" height="18"><defs><clipPath id="ec"><circle cx="12" cy="9" r="4.3"/></clipPath></defs><path d="M1 9 C5.5 1.5 18.5 1.5 23 9 C18.5 16.5 5.5 16.5 1 9Z" fill="none" stroke="#fff" stroke-width="1.7"/><circle cx="12" cy="9" r="5.3" fill="none" stroke="#fff" stroke-width="1.6"/><g clip-path="url(#ec)" stroke="#fff" stroke-width="1.3"><path d="M6 6 L15 15 M8.5 3.5 L17.5 12.5 M4 9 L12 17"/></g></svg>
<div class="a" style="left:454px;top:227px;width:15px;height:476px;border:1px solid #9c9c9c;border-radius:2px;background:linear-gradient(90deg,#f4f4f4 0%,#eaeaea 45%,#d7d7d7 55%,#cfcfcf 100%)"></div>
<svg style="left:457px;top:88px" width="9" height="6" viewBox="0 0 9 6"><path d="M0.5 5 L4.5 0.8 L8.5 5Z" fill="#8a8a8a"/></svg>
<!-- grid lines -->
<div class="vl" style="left:493px;top:176px;height:72px;background:#d5d5d5"></div>
<div class="vl" style="left:626px;top:176px;height:72px"></div>
<div class="vl" style="left:1110px;top:176px;height:72px"></div>
<div class="vl" style="left:1139px;top:176px;height:72px"></div>
<div class="vl" style="left:1220px;top:176px;height:72px"></div>
<div class="vl" style="left:1372px;top:176px;height:72px"></div>
<div class="vl" style="left:1524px;top:176px;height:72px"></div>
<div class="vl" style="left:1650px;top:176px;height:72px"></div>
<div class="vl" style="left:627px;top:153px;height:22px;background:#dcdde0"></div>
<div class="vl" style="left:1111px;top:153px;height:22px;background:#dcdde0"></div>
<div class="vl" style="left:1140px;top:153px;height:22px;background:#dcdde0"></div>
<div class="vl" style="left:1221px;top:153px;height:22px;background:#dcdde0"></div>
<div class="vl" style="left:1373px;top:153px;height:22px;background:#dcdde0"></div>
<div class="vl" style="left:1525px;top:153px;height:22px;background:#dcdde0"></div>
<div class="hl" style="left:494px;top:175px;width:1157px;background:#d3d3d3"></div>
<div class="hl" style="left:480px;top:199px;width:1171px"></div>
<div class="hl" style="left:480px;top:223px;width:1171px"></div>
<div class="hl" style="left:494px;top:247px;width:1157px"></div>
<div class="t" style="left:499px;top:158px">Name</div>
<div class="t" style="left:632px;top:158px">Beschreibung</div>
<div class="t" style="left:1116px;top:158px">Typ</div>
<div class="t" style="left:1145px;top:158px">Standardwert</div>
<div class="t" style="left:1225px;top:158px">Bindbar an Systempartners</div>
<div class="t" style="left:1377px;top:158px">Bindbar an Handlespartner</div>
<div class="t" style="left:1529px;top:158px">Werte-Provider</div>
<div class="t" style="left:496px;top:182px">AutomatischVerarbeiten</div>
<div class="t" style="left:629px;top:182px;letter-spacing:-0.075px">Eingehende Nachrichten werden automatisch verarbeitet wenn die Variable auf TRUE steht</div>
<div class="t" style="left:1113px;top:182px">Flag</div>
<div class="t" style="left:1143px;top:182px">True</div>
<div class="t" style="left:496px;top:206px">Test</div>
<div class="t" style="left:1113px;top:206px">Flag</div>
<div class="t" style="left:1143px;top:206px">True</div>
<div class="t" style="left:496px;top:230px">test-VarDef</div>
<div class="t" style="left:629px;top:230px">Test-VariableDefinition</div>
<div class="t" style="left:1113px;top:230px">Flag</div>
<div class="t" style="left:1143px;top:230px">false</div>
<div class="t" style="left:1588px;top:844px;letter-spacing:-0.2px">Entitäten: 3</div>
<svg style="left:1290px;top:182px" width="12" height="12"><path d="M1.5 6.5 L4.5 9.5 L10.5 2" fill="none" stroke="#000" stroke-width="1.6"/></svg>
<svg style="left:1442px;top:182px" width="12" height="12"><path d="M1.5 6.5 L4.5 9.5 L10.5 2" fill="none" stroke="#000" stroke-width="1.6"/></svg>
<svg style="left:1290px;top:206px" width="12" height="12"><path d="M1.5 6.5 L4.5 9.5 L10.5 2" fill="none" stroke="#000" stroke-width="1.6"/></svg>
<svg style="left:1442px;top:206px" width="12" height="12"><path d="M1.5 6.5 L4.5 9.5 L10.5 2" fill="none" stroke="#000" stroke-width="1.6"/></svg>
<svg style="left:1290px;top:230px" width="12" height="12"><path d="M1.5 6.5 L4.5 9.5 L10.5 2" fill="none" stroke="#000" stroke-width="1.6"/></svg>
<svg style="left:1442px;top:230px" width="12" height="12"><path d="M1.5 6.5 L4.5 9.5 L10.5 2" fill="none" stroke="#000" stroke-width="1.6"/></svg>

<!-- ===== DIALOG ===== -->
<div class="a" style="left:458px;top:267px;width:884px;height:587px;border-radius:7px 7px 6px 6px;box-shadow:0 0 4px 1px rgba(0,0,0,0.45),0 2px 13px 3px rgba(0,0,0,0.42);background:#1f2a36"></div>
<div class="a" style="left:459px;top:268px;width:882px;height:585px;border-radius:6px 6px 5px 5px;background:linear-gradient(100deg,#cfe0f2 0%,#bcd5ef 10%,#a9c8eb 25%,#b4cfee 38%,#a4c5ea 52%,#a9c9ec 62%,#bad3ef 72%,#a9c8ea 85%,#cde0f3 100%)"></div>
<div class="a" style="left:459px;top:268px;width:882px;height:40px;border-radius:6px 6px 0 0;border-top:1px solid rgba(255,255,255,0.75);background:linear-gradient(rgba(255,255,255,0.18),rgba(255,255,255,0))"></div>
<div class="a" style="left:459px;top:268px;width:882px;height:585px;border-radius:6px 6px 5px 5px;box-shadow:inset 1px 0 0 rgba(255,255,255,0.6),inset -1px 0 0 rgba(255,255,255,0.5),inset 0 -1px 0 rgba(255,255,255,0.4)"></div>
<!-- title -->
<svg style="left:466px;top:274px" width="16" height="16" viewBox="0 0 16 16"><circle cx="8" cy="8" r="7.2" fill="#f3f0fb" stroke="#8a7ac8" stroke-width="1.2"/><text x="8" y="12.3" text-anchor="middle" font-family="Liberation Sans" font-size="13" fill="#6a5ab8">@</text></svg>

<div class="t" style="left:487px;top:275px;color:#000">Öffnen</div>
<!-- close -->
<div class="a" style="left:1288px;top:267px;width:47px;height:20px;border:1px solid #5a1f1a;border-top:none;border-radius:0 0 5px 5px;background:linear-gradient(#e8a59a 0%,#d88a7d 40%,#c2402c 50%,#cf4e36 80%,#e0826a 100%)"></div>
<svg style="left:1305px;top:270px" width="14" height="14"><path d="M4 4 L10 10 M10 4 L4 10" stroke="#3a3f4a" stroke-width="4.2" stroke-linecap="round"/><path d="M4 4 L10 10 M10 4 L4 10" stroke="#fff" stroke-width="2.3" stroke-linecap="round"/></svg>
<!-- nav buttons -->
<div class="a" style="left:467px;top:300px;width:58px;height:27px;border-radius:14px;background:rgba(150,175,200,0.12);border:1px solid rgba(90,110,140,0.22)"></div>
<div class="a" style="left:470px;top:301px;width:24px;height:24px;border-radius:50%;border:1px solid #0f3283;background:linear-gradient(#8aa6e2 0%,#4b77d2 40%,#1a47b8 49%,#0033a6 52%,#0b5fd6 80%,#3ed8ff 100%)"></div>
<svg style="left:473px;top:306px" width="17" height="15"><path d="M1.2 7 L7.2 1.3 Q8.8 0.2 9 2 V4.9 H14.6 Q15.6 4.9 15.6 5.9 V8.3 Q15.6 9.3 14.6 9.3 H9 V12.2 Q8.8 14 7.2 12.8Z" fill="#fff"/></svg>
<div class="a" style="left:497px;top:301px;width:24px;height:24px;border-radius:50%;border:1px solid #6f7c8a;background:linear-gradient(#eef3f8 0%,#e2e9f0 48%,#d5dee7 52%,#dbe4ec 100%)"></div>
<svg style="left:502px;top:306px" width="17" height="15"><path d="M15.4 7 L9.4 1.3 Q7.8 0.2 7.6 2 V4.9 H2 Q1 4.9 1 5.9 V8.3 Q1 9.3 2 9.3 H7.6 V12.2 Q7.8 14 9.4 12.8Z" fill="#e9eef4"/></svg>
<svg style="left:525px;top:310px" width="10" height="8"><path d="M0.5 1 H9.5 L5 7 Z" fill="#2c77c8" stroke="#1d4f9a" stroke-width="0.6"/></svg>
<!-- address bar -->
<div class="a" style="left:537px;top:302px;width:588px;height:22px;border:1px solid #8294aa;border-bottom-color:#c6d2de;background:linear-gradient(#f4f7fb,#e9eff7)"></div>
<div class="a" style="left:1099px;top:303px;width:1px;height:20px;background:#a9b7c7"></div>
<svg style="left:541px;top:304px" width="14" height="16"><path d="M1 2 Q1 1 2 1 H6 L7 2 H12 Q13 2 13 3 V14 Q13 15 12 15 H2 Q1 15 1 14 Z" fill="#e8c44e"/><path d="M1 2 H5 V15 H2 Q1 15 1 14Z" fill="#f7e28c"/><path d="M5 2 L9 3 V15 L5 15Z" fill="#f0d36a"/></svg>
<svg style="left:563px;top:310px" width="6" height="8"><path d="M0.5 0 L5.5 4 L0.5 8Z" fill="#000"/></svg>
<div class="t" style="left:577px;top:306px">temp</div>
<svg style="left:1085px;top:310px" width="9" height="6"><path d="M0 0.5 H9 L4.5 5.5Z" fill="#1b2b4b"/></svg>
<svg style="left:1103px;top:305px" width="18" height="15"><path d="M2 7 Q3 2 8 2 L8 0 L12 3.5 L8 7 L8 5 Q5 5 4.5 8Z" fill="#2f77c9"/><path d="M16 8 Q15 13 10 13 L10 15 L6 11.5 L10 8 L10 10 Q13 10 13.5 7Z" fill="#2f77c9"/></svg>
<!-- search box -->
<div class="a" style="left:1131px;top:302px;width:203px;height:22px;border:1px solid #8a9cb0;border-bottom-color:#c6d2de;background:linear-gradient(#f4f7fb,#edf2f8)"></div>
<div class="t" style="left:1140px;top:306px;font-style:italic;color:#6d6d6d;letter-spacing:-0.15px">temp durchsuchen</div>
<svg style="left:1313px;top:305px" width="15" height="15"><circle cx="9" cy="5.5" r="3.8" fill="none" stroke="#2f7fd0" stroke-width="2"/><path d="M6.5 8.5 L2 13" stroke="#1d4f9a" stroke-width="2.4" stroke-linecap="round"/></svg>
<!-- content -->
<div class="a" style="left:465px;top:331px;width:870px;height:516px;border:1px solid #6b7c92;background:#f0f0f0"></div>
<div class="a" style="left:466px;top:332px;width:868px;height:31px;border-bottom:1px solid #a3b6cc;background:linear-gradient(#fcfdfe 0%,#f1f5fb 45%,#e1e9f4 55%,#dce6f3 100%)"></div>
<div class="t" style="left:484px;top:340px;color:#1e395b">Organisieren</div>
<svg style="left:556px;top:345px" width="8" height="5"><path d="M0 0 H8 L4 4.5Z" fill="#1e395b"/></svg>
<div class="t" style="left:595px;top:340px;color:#1e395b">Neuer Ordner</div>
<svg style="left:1211px;top:339px" width="18" height="15"><g fill="#6d7e92"><rect x="1" y="1" width="3" height="3" fill="none" stroke="#7a8a9c" stroke-width="1"/><rect x="1" y="6" width="3" height="3" fill="none" stroke="#7a8a9c" stroke-width="1"/><rect x="1" y="11" width="3" height="3" fill="none" stroke="#7a8a9c" stroke-width="1"/><rect x="6" y="2" width="4" height="1"/><rect x="11" y="2" width="5" height="1"/><rect x="6" y="7" width="4" height="1"/><rect x="11" y="7" width="5" height="1"/><rect x="6" y="12" width="4" height="1"/><rect x="11" y="12" width="5" height="1"/></g><rect x="2" y="7" width="1" height="1" fill="#e03030"/></svg>
<svg style="left:1238px;top:345px" width="8" height="5"><path d="M0 0 H8 L4 4.5Z" fill="#1e395b"/></svg>
<svg style="left:1266px;top:339px" width="17" height="16"><rect x="1.5" y="1.5" width="14" height="13" fill="#fff" stroke="#5a6a7c"/><rect x="11" y="2" width="4" height="12" fill="#7fc4e0"/><path d="M10.5 2 V14" stroke="#5a6a7c"/></svg>
<svg style="left:1302px;top:337px" width="19" height="19"><circle cx="9.5" cy="9.5" r="8.5" fill="#2a55b0" stroke="#6c7a8c" stroke-width="1.5"/><circle cx="9.5" cy="9.5" r="6.5" fill="url(#hg)"/><defs><radialGradient id="hg" cx="0.5" cy="0.3" r="0.7"><stop offset="0" stop-color="#6aa0ee"/><stop offset="1" stop-color="#1a3f9a"/></radialGradient></defs><text x="9.5" y="14" text-anchor="middle" font-family="Liberation Sans" font-weight="bold" font-size="12" fill="#fff">?</text></svg>
<!-- nav pane -->
<div class="a" style="left:466px;top:363px;width:272px;height:407px;background:#fcfcfc"></div>
<div class="a" style="left:738px;top:363px;width:1px;height:407px;background:#d5e3f3"></div>
<div class="a" style="left:739px;top:363px;width:595px;height:391px;background:#fcfcfc"></div>

<!-- nav tree -->
<svg style="left:477px;top:378px" width="6" height="9"><path d="M0.5 0.5 L5 4.5 L0.5 8.5Z" fill="#fff" stroke="#8a8a8a" stroke-width="1"/></svg>
<svg style="left:486px;top:374px" width="17" height="16"><defs><linearGradient id="sg" x1="0" y1="0" x2="0" y2="1"><stop offset="0" stop-color="#ffe98a"/><stop offset="1" stop-color="#f09a1a"/></linearGradient></defs><path d="M8.5 0.5 L10.8 5.6 L16.3 6.1 L12.1 9.8 L13.4 15.3 L8.5 12.4 L3.6 15.3 L4.9 9.8 L0.7 6.1 L6.2 5.6Z" fill="url(#sg)" stroke="#e07a10" stroke-width="0.8"/></svg>
<div class="t" style="left:507px;top:376px">Favoriten</div>
<svg style="left:477px;top:420px" width="7" height="7"><path d="M6.5 0.5 V6.5 H0.5Z" fill="#404040"/></svg>
<svg style="left:485px;top:416px" width="18" height="16"><path d="M1 3 H7 L8 2 H16 V14 H1Z" fill="#e9c865"/><path d="M1 5 H17 L16 14 H1Z" fill="#f6dd8a" stroke="#c9a441" stroke-width="0.6"/><rect x="5" y="8" width="8" height="4" fill="#5aa4dc"/><rect x="6" y="12" width="2" height="2" fill="#5aa4dc"/><rect x="10" y="12" width="2" height="2" fill="#5aa4dc"/></svg>
<div class="t" style="left:507px;top:418px">Bibliotheken</div>
<svg style="left:487px;top:441px" width="6" height="9"><path d="M0.5 0.5 L5 4.5 L0.5 8.5Z" fill="#fff" stroke="#8a8a8a" stroke-width="1"/></svg>
<div class="t" style="left:517px;top:439px">Bilder</div>
<svg style="left:487px;top:462px" width="6" height="9"><path d="M0.5 0.5 L5 4.5 L0.5 8.5Z" fill="#fff" stroke="#8a8a8a" stroke-width="1"/></svg>
<div class="t" style="left:517px;top:460px">Dokumente</div>
<svg style="left:487px;top:483px" width="6" height="9"><path d="M0.5 0.5 L5 4.5 L0.5 8.5Z" fill="#fff" stroke="#8a8a8a" stroke-width="1"/></svg>
<div class="t" style="left:517px;top:481px">Musik</div>
<svg style="left:487px;top:504px" width="6" height="9"><path d="M0.5 0.5 L5 4.5 L0.5 8.5Z" fill="#fff" stroke="#8a8a8a" stroke-width="1"/></svg>
<div class="t" style="left:517px;top:502px">Subversion</div>
<svg style="left:487px;top:525px" width="6" height="9"><path d="M0.5 0.5 L5 4.5 L0.5 8.5Z" fill="#fff" stroke="#8a8a8a" stroke-width="1"/></svg>
<div class="t" style="left:517px;top:523px">Videos</div>
<svg style="left:496px;top:438px" width="16" height="14"><rect x="0.5" y="1.5" width="15" height="12" fill="#fff" stroke="#6b6b6b"/><rect x="2" y="3" width="12" height="9" fill="#7cc4ea"/><path d="M2 9 Q6 6 9 8 T14 8 V12 H2Z" fill="#2d8a3e"/></svg>
<svg style="left:498px;top:458px" width="14" height="17"><path d="M0.5 0.5 H9 L13.5 5 V16.5 H0.5Z" fill="#fff" stroke="#7a7a7a"/><g stroke="#9ab" stroke-width="1"><path d="M3 7 H11 M3 9 H11 M3 11 H11 M3 13 H11"/></g><rect x="7" y="8" width="3" height="3" fill="#3a7ac8"/></svg>
<svg style="left:497px;top:479px" width="14" height="17"><path d="M6 1 V12" stroke="#2a7fd0" stroke-width="1.6"/><ellipse cx="4" cy="13" rx="3.5" ry="2.8" fill="#2a7fd0"/><path d="M6 1 Q12 3 11 9 Q10 5 6 5" fill="#4a9ae0"/></svg>
<svg style="left:496px;top:500px" width="16" height="17"><path d="M3.5 0.5 H11 L15.5 5 V16.5 H3.5Z" fill="#f4f6f8" stroke="#8a97a6"/><rect x="0.5" y="6.5" width="11" height="8" fill="#eef3f8" stroke="#8a97a6"/><path d="M2 9 H10 M2 11 H10" stroke="#5a8ac0"/></svg>
<svg style="left:497px;top:521px" width="15" height="16"><rect x="0" y="0" width="15" height="16" fill="#222"/><rect x="3" y="1" width="9" height="14" fill="#3a8ed0"/><path d="M3 10 Q7 6 12 9 V15 H3Z" fill="#a04a2a"/><g fill="#ddd"><rect x="0.8" y="1" width="1.4" height="1.5"/><rect x="0.8" y="4.5" width="1.4" height="1.5"/><rect x="0.8" y="8" width="1.4" height="1.5"/><rect x="0.8" y="11.5" width="1.4" height="1.5"/><rect x="12.8" y="1" width="1.4" height="1.5"/><rect x="12.8" y="4.5" width="1.4" height="1.5"/><rect x="12.8" y="8" width="1.4" height="1.5"/><rect x="12.8" y="11.5" width="1.4" height="1.5"/></g></svg>
<svg style="left:477px;top:567px" width="6" height="9"><path d="M0.5 0.5 L5 4.5 L0.5 8.5Z" fill="#fff" stroke="#8a8a8a" stroke-width="1"/></svg>
<svg style="left:485px;top:564px" width="18" height="16"><rect x="0.5" y="5" width="3" height="10" fill="#d8dde2" stroke="#7a8490" stroke-width="0.8"/><rect x="4.5" y="1.5" width="12" height="10" fill="#1a4fc0" stroke="#556" stroke-width="1"/><rect x="6" y="3" width="9" height="7" fill="#2a7ae8"/><path d="M8 12 H13 L14 15 H7Z" fill="#9aa4ae"/></svg>
<div class="t" style="left:507px;top:565px">Computer</div>
<svg style="left:477px;top:609px" width="6" height="9"><path d="M0.5 0.5 L5 4.5 L0.5 8.5Z" fill="#fff" stroke="#8a8a8a" stroke-width="1"/></svg>
<svg style="left:485px;top:605px" width="18" height="18"><circle cx="6" cy="6" r="5.5" fill="#3aa0e0"/><path d="M2 3 Q5 5 3 8 Q6 9 7 11 Q9 7 6 5 Q8 2 6 1" fill="#3ab040"/><rect x="7.5" y="6.5" width="10" height="8" fill="#1a4fc0" stroke="#334" stroke-width="1"/><rect x="9" y="8" width="7" height="5" fill="#2a7ae8"/><path d="M11 15 H14 V17 H11Z" fill="#556"/></svg>
<div class="t" style="left:507px;top:607px">Netzwerk</div>
<div class="t" style="left:757px;top:369px;color:#4c607a">Name</div>
<svg style="left:877px;top:363px" width="9" height="6"><path d="M0.5 5 L4.5 1 L8.5 5" fill="none" stroke="#8aa0b8" stroke-width="1.3"/></svg>
<div class="t" style="left:1018px;top:369px;color:#4c607a">Änderungsdatum</div>
<div class="t" style="left:1138px;top:369px;color:#4c607a">Typ</div>
<div class="t" style="left:1258px;top:369px;color:#4c607a">Größe</div>
<div class="a" style="left:1011px;top:363px;width:1px;height:25px;background:linear-gradient(#ffffff,#e3e8ee)"></div>
<div class="a" style="left:1131px;top:363px;width:1px;height:25px;background:linear-gradient(#ffffff,#e3e8ee)"></div>
<div class="a" style="left:1251px;top:363px;width:1px;height:25px;background:linear-gradient(#ffffff,#e3e8ee)"></div>
<div class="a" style="left:1331px;top:363px;width:1px;height:25px;background:linear-gradient(#ffffff,#e3e8ee)"></div>
<svg style="left:759px;top:396px" width="15" height="17"><path d="M0.7 0.7 H9.5 L13.3 4.5 V15.5 H0.7Z" fill="#fdfdfd" stroke="#8a8a8a" stroke-width="1.3"/><path d="M9.5 0.7 V4.5 H13.3" fill="#e6e6e6" stroke="#aaa" stroke-width="0.8"/><circle cx="7.1" cy="6.2" r="2.1" fill="#2a9a6a"/><circle cx="6.8" cy="5.7" r="1" fill="#4ab0e0"/><path d="M4 4.6 L2.4 6 L4 7.4 M10.2 4.6 L11.8 6 L10.2 7.4" fill="none" stroke="#555" stroke-width="1"/><path d="M3 10.3 H11 M3 12.5 H11" stroke="#8888aa" stroke-width="1.1"/></svg>
<div class="t" style="left:778px;top:398px;letter-spacing:-0.15px">varDefDump_eBiss.DbAdapter.Connectio...</div>
<div class="t" style="left:1018px;top:398px;color:#6d6d6d;letter-spacing:-0.6px">04.10.2016 16:05</div>
<div class="t" style="left:1138px;top:398px;color:#6d6d6d">XML-Dokument</div>
<div class="t" style="left:1299px;top:398px;color:#6d6d6d;width:24px;text-align:right">1 KB</div>
<svg style="left:759px;top:417px" width="15" height="17"><path d="M0.7 0.7 H9.5 L13.3 4.5 V15.5 H0.7Z" fill="#fdfdfd" stroke="#8a8a8a" stroke-width="1.3"/><path d="M9.5 0.7 V4.5 H13.3" fill="#e6e6e6" stroke="#aaa" stroke-width="0.8"/><circle cx="7.1" cy="6.2" r="2.1" fill="#2a9a6a"/><circle cx="6.8" cy="5.7" r="1" fill="#4ab0e0"/><path d="M4 4.6 L2.4 6 L4 7.4 M10.2 4.6 L11.8 6 L10.2 7.4" fill="none" stroke="#555" stroke-width="1"/><path d="M3 10.3 H11 M3 12.5 H11" stroke="#8888aa" stroke-width="1.1"/></svg>
<div class="t" style="left:778px;top:419px;letter-spacing:-0.15px">varDefDump_eBiss.DbAdapter.Connectio...</div>
<div class="t" style="left:1018px;top:419px;color:#6d6d6d;letter-spacing:-0.6px">04.10.2016 16:05</div>
<div class="t" style="left:1138px;top:419px;color:#6d6d6d">XML-Dokument</div>
<div class="t" style="left:1299px;top:419px;color:#6d6d6d;width:24px;text-align:right">1 KB</div>
<svg style="left:759px;top:438px" width="15" height="17"><path d="M0.7 0.7 H9.5 L13.3 4.5 V15.5 H0.7Z" fill="#fdfdfd" stroke="#8a8a8a" stroke-width="1.3"/><path d="M9.5 0.7 V4.5 H13.3" fill="#e6e6e6" stroke="#aaa" stroke-width="0.8"/><circle cx="7.1" cy="6.2" r="2.1" fill="#2a9a6a"/><circle cx="6.8" cy="5.7" r="1" fill="#4ab0e0"/><path d="M4 4.6 L2.4 6 L4 7.4 M10.2 4.6 L11.8 6 L10.2 7.4" fill="none" stroke="#555" stroke-width="1"/><path d="M3 10.3 H11 M3 12.5 H11" stroke="#8888aa" stroke-width="1.1"/></svg>
<div class="t" style="left:778px;top:440px;letter-spacing:-0.15px">varDefDump_eBiss.DbAdapter.TraceSql.x...</div>
<div class="t" style="left:1018px;top:440px;color:#6d6d6d;letter-spacing:-0.6px">04.10.2016 16:05</div>
<div class="t" style="left:1138px;top:440px;color:#6d6d6d">XML-Dokument</div>
<div class="t" style="left:1299px;top:440px;color:#6d6d6d;width:24px;text-align:right">1 KB</div>
<div class="a" style="left:739px;top:754px;width:595px;height:16px;background:#e8e8e8"></div>
<svg style="left:745px;top:757px" width="6" height="9"><path d="M5 0.5 L0.5 4.5 L5 8.5Z" fill="#404040"/></svg>
<div class="a" style="left:758px;top:754px;width:551px;height:15px;border:1px solid #9a9a9a;border-radius:2px;background:linear-gradient(#f5f5f5 0%,#ececec 45%,#d9d9d9 55%,#d2d2d2 100%)"></div>
<svg style="left:1029px;top:757px" width="8" height="9"><path d="M1 0.5 V8.5 M3.5 0.5 V8.5 M6 0.5 V8.5" stroke="#6a6a6a" stroke-width="1"/></svg>
<svg style="left:1322px;top:757px" width="6" height="9"><path d="M0.5 0.5 L5 4.5 L0.5 8.5Z" fill="#404040"/></svg>
<!-- bottom -->
<div class="t" style="left:596px;top:784px">Dateiname:</div>
<div class="a" style="left:661px;top:779px;width:456px;height:24px;border:1px solid #dbdfe6;border-top-color:#abadb3;border-left-color:#e2e3ea;border-radius:2px;background:#fff"></div>
<div class="t" style="left:665px;top:784px">VarDeftest-VarDef.xml</div>
<svg style="left:1104px;top:789px" width="8" height="5"><path d="M0 0 H8 L4 4.5Z" fill="#000"/></svg>
<div class="a" style="left:1129px;top:779px;width:188px;height:23px;border:1px solid #707070;border-radius:3px;background:linear-gradient(#f2f2f2 0%,#ebebeb 50%,#dddddd 51%,#cfcfcf 100%)"></div>
<div class="t" style="left:1133px;top:784px">Dateien (*VarDef*.xml)</div>
<svg style="left:1302px;top:789px" width="9" height="5"><path d="M0 0 H9 L4.5 4.5Z" fill="#000"/></svg>
<div class="a" style="left:1130px;top:809px;width:86px;height:24px;border:1px solid #3a9fdc;border-radius:3px;background:linear-gradient(#f2f2f2 0%,#ebebeb 50%,#dddddd 51%,#d0d0d0 100%);box-shadow:inset 0 0 0 1px #a9def8"></div>
<div class="a" style="left:1202px;top:812px;width:2px;height:18px;background:#777"></div>
<div class="t" style="left:1147px;top:814px">Öffnen</div>
<svg style="left:1205px;top:819px" width="8" height="5"><path d="M0 0 H8 L4 4.5Z" fill="#000"/></svg>
<div class="a" style="left:1230px;top:809px;width:87px;height:24px;border:1px solid #707070;border-radius:3px;background:linear-gradient(#f2f2f2 0%,#ebebeb 50%,#dddddd 51%,#cfcfcf 100%);box-shadow:inset 0 0 0 1px #fcfcfc"></div>
<div class="t" style="left:1244px;top:814px">Abbrechen</div>
<svg style="left:1323px;top:835px" width="9" height="9"><g fill="#b8b8b8"><rect x="6" y="0" width="2" height="2"/><rect x="3" y="3" width="2" height="2"/><rect x="6" y="3" width="2" height="2"/><rect x="0" y="6" width="2" height="2"/><rect x="3" y="6" width="2" height="2"/><rect x="6" y="6" width="2" height="2"/></g></svg>
</body></html>
